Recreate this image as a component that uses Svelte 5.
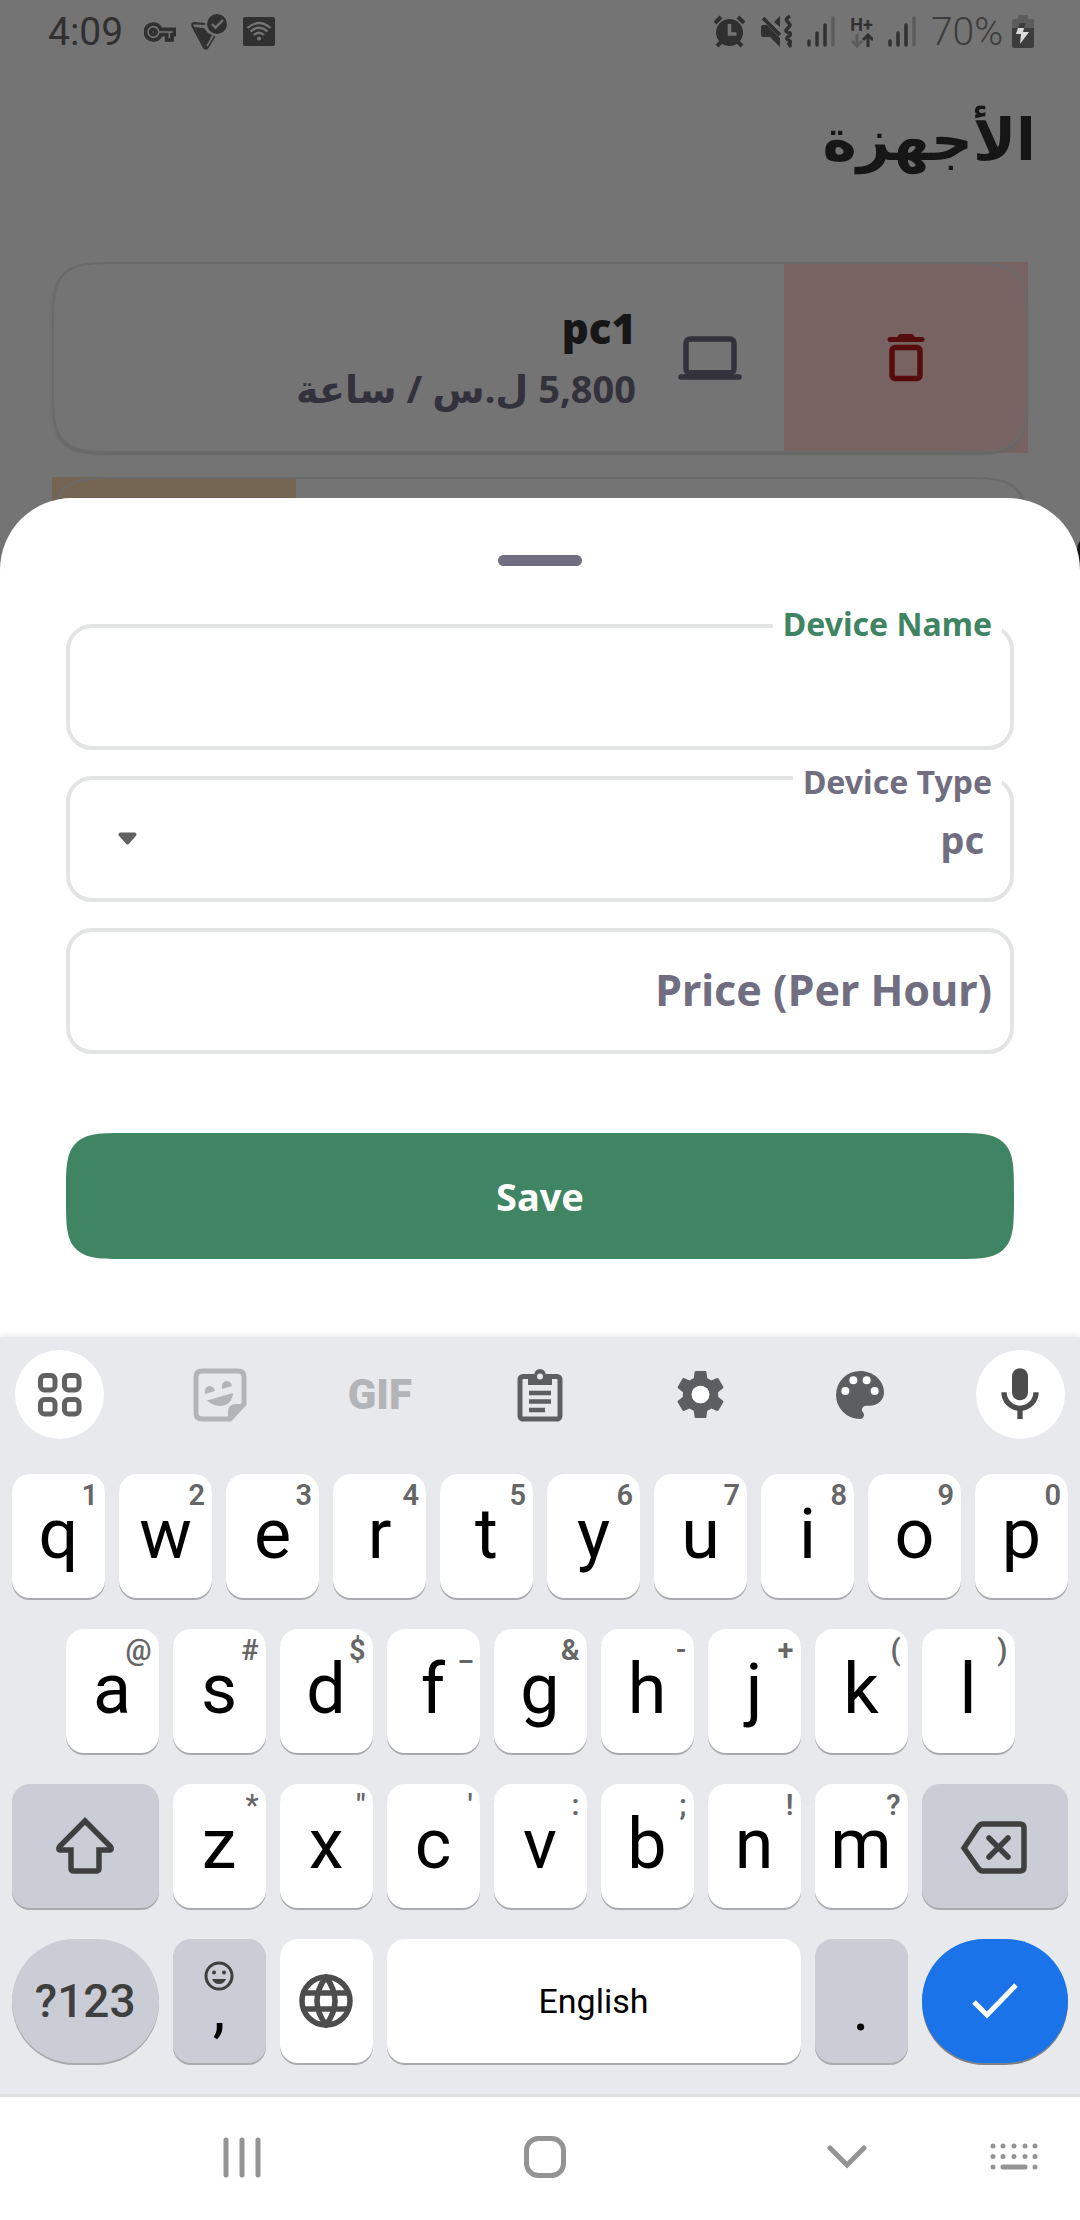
<script>
  let deviceName = $state('');
  let deviceType = $state('pc');
  let price = $state('');

  const numberRow = ['q1', 'w2', 'e3', 'r4', 't5', 'y6', 'u7', 'i8', 'o9', 'p0'];
  const homeRow = ['a@', 's#', 'd$', 'f_', 'g&', 'h-', 'j+', 'k(', 'l)'];
  const lowerRow = ['z*', 'x"', "c'", 'v:', 'b;', 'n!', 'm?'];
</script>

{#snippet letter(pair)}
  <button type="button" class="key">
    <span class="hint">{pair[1]}</span>
    <span class="glyph">{pair[0]}</span>
  </button>
{/snippet}

{#snippet signal()}
  <svg width="28" height="36" viewBox="0 0 28 36" aria-hidden="true">
    <g stroke="#303030" stroke-width="3.500" stroke-linecap="round">
      <path d="M2 27v4M10 19v12M18 11v20" />
      <path d="M26 4v27" stroke="#5c5c5c" />
    </g>
  </svg>
{/snippet}

<div class="screen">
  <div class="stage">
    <div class="backdrop">
      <header class="status">
        <div class="status-group">
          <span class="clock">4:09</span>
          <svg class="key-icon" width="32" height="32" viewBox="0 0 24 24" fill="#303030" stroke="#303030" stroke-width=".8" aria-hidden="true">
            <path d="M22 19h-6v-4h-2.68c-1.14 2.42-3.6 4-6.32 4-3.86 0-7-3.14-7-7s3.14-7 7-7c2.72 0 5.17 1.58 6.32 4H24v6h-2v4zm-4-2h2v-4h2v-2H11.94l-.23-.67C11.01 8.34 9.11 7 7 7c-2.76 0-5 2.24-5 5s2.24 5 5 5c2.11 0 4.01-1.34 4.71-3.33l.23-.67H18v4zM7 15c-1.65 0-3-1.35-3-3s1.35-3 3-3 3 1.35 3 3-1.35 3-3 3zm0-4c-.55 0-1 .45-1 1s.45 1 1 1 1-.45 1-1-.45-1-1-1z" />
          </svg>
          <svg width="37" height="38" viewBox="0 0 37 38" aria-hidden="true">
            <path d="M3 14l10 1 4 5 4 2-6 14z" fill="#303030" />
            <path d="M14 11L3 10.200Q.8 10.500 1.500 13L13 34.500Q14.500 37 16.500 34.500L23.500 23" fill="none" stroke="#303030" stroke-width="2.200" />
            <path d="M4 12.800l10 1.200M16 33l6-10" stroke="#747474" stroke-width="1.500" />
            <circle cx="26" cy="11" r="11.500" fill="#747474" />
            <circle cx="26" cy="11" r="10" fill="#303030" />
            <path d="M21 11l3.500 3.500L32 7" fill="none" stroke="#747474" stroke-width="2.400" />
          </svg>
          <svg width="32" height="36" viewBox="0 0 32 36" aria-hidden="true">
            <rect x="0" y="3" width="32" height="29" rx="2" fill="#303030" />
            <g fill="none" stroke="#747474" stroke-width="2.200">
              <path d="M4.500 14q11.500-10 23 0M7.500 17.500q8.500-7.500 17 0M11 21q5-4.500 10 0" />
            </g>
            <circle cx="16" cy="24.500" r="2" fill="#747474" />
          </svg>
        </div>
        <div class="status-group">
          <svg width="33" height="36" viewBox="0 0 33 36" aria-hidden="true">
            <circle cx="16.500" cy="18.500" r="13.500" fill="#303030" />
            <path d="M2 9l6-6M31 9l-6-6M4 32l5-5M29 32l-5-5" stroke="#303030" stroke-width="4" />
            <path d="M16.500 10v10h7" fill="none" stroke="#747474" stroke-width="3.600" />
          </svg>
          <svg width="31" height="36" viewBox="0 0 31 36" aria-hidden="true">
            <path d="M0 13q0-2 2-2h4l13 13v9L9 23H2q-2 0-2-2zM19 2v11l-6-5z" fill="#303030" />
            <path d="M2 4l17 17" stroke="#303030" stroke-width="3.500" />
            <path d="M29 2q-5 3-3 5t3 4q0 1-3 4t3 4q1 2-2 4t2 4q1 2-1 3l2 3" fill="none" stroke="#303030" stroke-width="3.500" />
          </svg>
          {@render signal()}
          <div class="network" aria-hidden="true">
            <span>H+</span>
            <svg width="22" height="15" viewBox="0 0 22 15">
              <path d="M6 1v12M1 8l5 5 5-5" fill="none" stroke="#5c5c5c" stroke-width="3" />
              <path d="M17 14V2M12 7l5-5 5 5" fill="none" stroke="#303030" stroke-width="3" />
            </svg>
          </div>
          {@render signal()}
          <div class="battery">
            <span>70%</span>
            <svg width="22" height="36" viewBox="0 0 22 36" aria-hidden="true">
              <path d="M6 1h10v4h4q2 0 2 2v8H0V7q0-2 2-2h4z" fill="#5c5c5c" />
              <path d="M0 14h22v18q0 2-2 2H2q-2 0-2-2z" fill="#3c3c3c" />
              <path d="M8 9h6l-2 5H6z" fill="#3c3c3c" />
              <path d="M6 14h6l-1 4h6L8 30l1-10H4z" fill="#dcdcdc" />
            </svg>
          </div>
        </div>
      </header>

      <h1 dir="rtl">الأجهزة</h1>

      <article class="device" dir="rtl">
        <button type="button" class="swipe delete" aria-label="حذف">
          <svg width="38" height="48" viewBox="0 0 38 48" aria-hidden="true">
            <rect x="5" y="13.500" width="28" height="31" rx="3" fill="none" stroke="#560c0c" stroke-width="5.500" />
            <path d="M3 5.500h32" stroke="#560c0c" stroke-width="5" stroke-linecap="round" />
            <path d="M10 4q1-4 4-4h10q3 0 4 4z" fill="#560c0c" />
          </svg>
        </button>
        <svg class="laptop" width="64" height="44" viewBox="0 0 64 44" aria-hidden="true">
          <rect x="8" y="3" width="48" height="34" rx="4" fill="none" stroke="#33323c" stroke-width="5.500" />
          <path d="M3 41h58M12 37h40" stroke="#33323c" stroke-width="5.500" stroke-linecap="round" />
        </svg>
        <div class="device-text">
          <strong>pc1</strong>
          <span>5,800 ل.س / ساعة</span>
        </div>
      </article>
      <article class="device" dir="rtl">
        <div class="swipe edit"></div>
      </article>
      <div class="fab"></div>
    </div>

    <form class="sheet" onsubmit={(e) => e.preventDefault()}>
      <div class="handle"></div>
      <div class="fields">
        <div class="field">
          <input id="device-name" type="text" dir="rtl" bind:value={deviceName} />
          <label class="floating active" for="device-name">Device Name</label>
        </div>
        <div class="field">
          <select id="device-type" dir="rtl" bind:value={deviceType}>
            <option value="pc">pc</option>
          </select>
          <label class="floating filled" for="device-type">Device Type</label>
          <svg class="caret" width="19" height="13" viewBox="0 0 19 13" aria-hidden="true">
            <path d="M2.500 2.500h14L9.500 10.500z" fill="#616161" stroke="#616161" stroke-width="4" stroke-linejoin="round" />
          </svg>
        </div>
        <div class="field">
          <input id="price" type="text" dir="rtl" bind:value={price} />
          {#if !price}
            <label class="resting" for="price"><bdi>Price (Per Hour)</bdi></label>
          {/if}
        </div>
      </div>
      <button type="submit" class="save">Save</button>
    </form>
  </div>

  <section class="keyboard" aria-label="Keyboard">
    <div class="tools">
      <button type="button" class="round" aria-label="More">
        <svg width="44" height="44" viewBox="0 0 44 44" fill="none" stroke="#616161" stroke-width="5" aria-hidden="true">
          <rect x="2.500" y="2.500" width="14.500" height="14.500" rx="4" />
          <rect x="26.500" y="2.500" width="14.500" height="14.500" rx="4" />
          <rect x="2.500" y="26.500" width="14.500" height="14.500" rx="4" />
          <rect x="26.500" y="26.500" width="14.500" height="14.500" rx="4" />
        </svg>
      </button>
      <button type="button" aria-label="Stickers">
        <svg width="54" height="54" viewBox="0 0 54 54" aria-hidden="true">
          <path d="M37 51H9q-6 0-6-6V9q0-6 6-6h36q6 0 6 6v27z" fill="none" stroke="#b3b4b7" stroke-width="5" />
          <path d="M35 52V44q0-8 8-8h9z" fill="#b3b4b7" />
          <path d="M14 32.500l26-7.500q-1 12-12 13-8 0-14-5.500zM12 26q-1-7 4-8 5 0 6 5zM29 21q-1-7 4-8 5 0 6 5z" fill="#b3b4b7" />
        </svg>
      </button>
      <button type="button" class="gif">GIF</button>
      <button type="button" aria-label="Clipboard">
        <svg width="46" height="54" viewBox="0 0 46 54" aria-hidden="true">
          <rect x="3" y="8.500" width="40" height="42.500" rx="3" fill="none" stroke="#5d5e60" stroke-width="5" />
          <path d="M11 7h6q1-6 6-6t6 6h6v10H11z" fill="#5d5e60" />
          <circle cx="23" cy="8.500" r="3" fill="#e8e9ed" />
          <path d="M12 25h22M12 33.500h22M12 42h16" stroke="#5d5e60" stroke-width="4.500" />
        </svg>
      </button>
      <button type="button" aria-label="Settings">
        <svg width="59" height="59" viewBox="0 0 24 24" fill="#5d5e60" aria-hidden="true">
          <path d="M19.140 12.940c.04-.3.06-.61.06-.94 0-.32-.02-.64-.07-.94l2.030-1.580c.18-.14.23-.41.12-.61l-1.920-3.320c-.12-.22-.37-.29-.59-.22l-2.390.96c-.5-.38-1.030-.7-1.620-.94l-.36-2.540c-.04-.24-.24-.41-.48-.41h-3.840c-.24 0-.43.17-.47.41l-.36 2.540c-.59.24-1.130.57-1.620.94l-2.390-.96c-.22-.08-.47 0-.59.22L2.740 8.870c-.12.21-.08.47.12.61l2.030 1.580c-.05.3-.09.63-.09.94s.02.64.07.94l-2.030 1.580c-.18.14-.23.41-.12.61l1.920 3.320c.12.22.37.29.59.22l2.390-.96c.5.38 1.030.7 1.620.94l.36 2.540c.05.24.24.41.48.41h3.840c.24 0 .44-.17.47-.41l.36-2.540c.59-.24 1.130-.56 1.620-.94l2.390.96c.22.08.47 0 .59-.22l1.920-3.320c.12-.22.07-.47-.12-.61l-2.010-1.580zM12 15.600A3.600 3.600 0 1 1 12 8.400a3.600 3.600 0 0 1 0 7.200z" />
          <circle cx="12" cy="12" r="3.600" fill="#fff" />
        </svg>
      </button>
      <button type="button" aria-label="Themes">
        <svg width="64" height="64" viewBox="0 0 24 24" fill="#5d5e60" aria-hidden="true">
          <path d="M12 3a9 9 0 0 0 0 18c.83 0 1.500-.67 1.500-1.500 0-.39-.15-.74-.39-1.010-.23-.26-.38-.61-.38-.99 0-.83.67-1.500 1.500-1.500H16c2.760 0 5-2.240 5-5 0-4.420-4.030-8-9-8z" />
          <g fill="#fff">
            <circle cx="6.500" cy="10.500" r="1.500" />
            <circle cx="9.500" cy="6.500" r="1.500" />
            <circle cx="14.500" cy="6.500" r="1.500" />
            <circle cx="17.500" cy="10.500" r="1.500" />
          </g>
        </svg>
      </button>
      <button type="button" class="round" aria-label="Voice input">
        <svg class="mic" width="64" height="64" viewBox="0 0 24 24" fill="#4d4d4d" aria-hidden="true">
          <path d="M12 14c1.660 0 3-1.340 3-3V5c0-1.660-1.340-3-3-3S9 3.340 9 5v6c0 1.660 1.340 3 3 3z" />
          <path d="M17 11c0 2.760-2.240 5-5 5s-5-2.240-5-5H5c0 3.530 2.610 6.430 6 6.920V21h2v-3.080c3.390-.49 6-3.390 6-6.920h-2z" />
        </svg>
      </button>
    </div>

    <div class="row">
      {#each numberRow as pair}{@render letter(pair)}{/each}
    </div>
    <div class="row home">
      {#each homeRow as pair}{@render letter(pair)}{/each}
    </div>
    <div class="row">
      <button type="button" class="key wide tinted" aria-label="Shift">
        <svg width="64" height="64" viewBox="53 1813 64 64" fill="none" stroke="#3f3f3f" stroke-width="5.500" aria-hidden="true">
          <path d="M85 1820L60 1845Q57 1849 61 1849H71V1867Q71 1870 74 1870H96Q99 1870 99 1867V1849H109Q113 1849 110 1845Z" />
        </svg>
      </button>
      {#each lowerRow as pair}{@render letter(pair)}{/each}
      <button type="button" class="key wide tinted" aria-label="Backspace">
        <svg width="70" height="60" viewBox="959 1816 70 60" fill="none" stroke="#3f3f3f" stroke-width="5.500" aria-hidden="true">
          <path d="M963 1848L977 1827Q979 1824 982 1824H1019Q1023 1824 1023 1828V1867Q1023 1871 1019 1871H982Q979 1871 977 1868Z" />
          <path d="M988 1838l19 19M1007 1838l-19 19" stroke-linecap="round" />
        </svg>
      </button>
    </div>
    <div class="row">
      <button type="button" class="key wide tinted pill symbols">?123</button>
      <button type="button" class="key tinted punctuation">
        <svg class="smile" width="30" height="30" viewBox="0 0 30 30" aria-hidden="true">
          <circle cx="15" cy="15" r="13" fill="none" stroke="#3f3f3f" stroke-width="3" />
          <circle cx="10" cy="11.500" r="2" fill="#3f3f3f" />
          <circle cx="20" cy="11.500" r="2" fill="#3f3f3f" />
          <path d="M8 18h14q-2 5-7 5t-7-5z" fill="#3f3f3f" />
        </svg>
        <span>,</span>
      </button>
      <button type="button" class="key" aria-label="Change language">
        <svg width="54" height="54" viewBox="0 0 54 54" fill="none" stroke="#4d4d4d" stroke-width="5.500" aria-hidden="true">
          <circle cx="27" cy="27" r="24" />
          <path d="M27 3Q9 27 27 51Q45 27 27 3zM5 19h44M5 35h44" />
        </svg>
      </button>
      <button type="button" class="key space">English</button>
      <button type="button" class="key tinted punctuation"><span>.</span></button>
      <button type="button" class="key wide pill done" aria-label="Done">
        <svg width="48" height="38" viewBox="0 0 48 38" fill="none" stroke="#fff" stroke-width="5" aria-hidden="true">
          <path d="M3 20l13 13L45 3" />
        </svg>
      </button>
    </div>
  </section>

  <nav class="system" aria-label="System">
    <div class="system-main">
      <button type="button" aria-label="Recent apps">
        <svg width="40" height="42" viewBox="0 0 40 42" stroke="#949494" stroke-width="5" stroke-linecap="round" aria-hidden="true">
          <path d="M4 4v35M20 4v35M36 4v35" />
        </svg>
      </button>
      <button type="button" aria-label="Home">
        <svg width="42" height="42" viewBox="0 0 42 42" aria-hidden="true">
          <rect x="2.500" y="2.500" width="37" height="37" rx="12" fill="none" stroke="#949494" stroke-width="5" />
        </svg>
      </button>
      <button type="button" aria-label="Hide keyboard">
        <svg width="40" height="42" viewBox="0 0 40 42" aria-hidden="true">
          <path d="M3 12l17 17 17-17" fill="none" stroke="#949494" stroke-width="5" stroke-linecap="round" />
        </svg>
      </button>
    </div>
    <button type="button" aria-label="Switch keyboard">
      <svg width="48" height="42" viewBox="0 0 48 42" stroke="#949494" stroke-width="5" stroke-linecap="round" aria-hidden="true">
        <path d="M3 10h0M13 10h0M24 10h0M35 10h0M45 10h0M3 20.500h0M13 20.500h0M24 20.500h0M35 20.500h0M45 20.500h0M3 31h0M45 31h0M13 31h22" />
      </svg>
    </button>
  </nav>
</div>

<style>
  :global(body) {
    margin: 0;
    background: #fff;
  }

  .screen {
    display: flex;
    flex-direction: column;
    min-height: 100vh;
    font-family: Roboto, sans-serif;
  }

  button {
    display: flex;
    align-items: center;
    justify-content: center;
    margin: 0;
    padding: 0;
    border: 0;
    background: none;
    font-family: inherit;
    color: inherit;
  }

  svg {
    display: block;
    flex: none;
  }

  /* The sheet and the dimmed page share one grid cell. */
  .stage {
    display: grid;
    flex: 1;
    overflow: hidden;
    background: #747474;
  }

  .backdrop,
  .sheet {
    grid-area: 1 / 1;
    min-width: 0;
  }

  .backdrop {
    position: relative;
    display: flex;
    flex-direction: column;
    height: 0;
    color: #161616;
    font-family: 'Noto Sans', 'DejaVu Sans', sans-serif;
  }

  .status {
    display: flex;
    flex: none;
    align-items: center;
    justify-content: space-between;
    height: 64px;
    padding: 0 46px 0 48px;
    color: #303030;
    font-family: Roboto, sans-serif;
    font-size: 39px;
  }

  .status-group {
    display: flex;
    align-items: center;
    gap: 15px;
  }

  .key-icon {
    margin-left: 6px;
  }

  .network {
    display: flex;
    flex-direction: column;
    align-items: center;
    font-size: 18px;
    font-weight: 700;
    line-height: 17px;
  }

  .battery {
    display: flex;
    align-items: center;
    gap: 9px;
    color: #3c3c3c;
    font-weight: 300;
  }

  h1 {
    flex: none;
    margin: 0;
    padding: 24px 44px 74px;
    font-size: 58px;
    font-weight: 700;
    line-height: 100px;
    text-align: right;
  }

  .device {
    position: relative;
    display: flex;
    flex: none;
    align-items: center;
    height: 191px;
    margin: 0 52px 24px;
  }

  .device::after {
    content: '';
    position: absolute;
    inset: 0;
    border: 2px solid #696b6a;
    border-radius: 36px;
    box-shadow: 0 2px 2px #666;
    pointer-events: none;
  }

  .swipe {
    align-self: stretch;
    width: 25%;
  }

  .delete {
    background: #776462;
  }

  .edit {
    margin-right: auto;
    background: #756653;
  }

  .laptop {
    margin: 0 42px;
  }

  .device-text {
    display: flex;
    flex-direction: column;
    color: #33323c;
    font-size: 38px;
    font-weight: 700;
    line-height: 60px;
  }

  .device-text strong {
    color: #161616;
    font-size: 42px;
  }

  /* Floating action button, almost wholly off the right edge. */
  .fab {
    position: absolute;
    top: 534px;
    right: -30px;
    width: 33px;
    height: 80px;
    border-radius: 16px;
    background: #161616;
  }

  .sheet {
    display: flex;
    flex-direction: column;
    align-self: end;
    position: relative;
    padding: 57px 66px 78px;
    border-radius: 72px 72px 0 0;
    background: #fff;
    color: #706e80;
    font-family: 'Noto Sans', sans-serif;
    font-weight: 700;
  }

  .handle {
    align-self: center;
    width: 84px;
    height: 11px;
    margin-bottom: 58px;
    border-radius: 6px;
    background: #706e80;
  }

  .fields {
    display: flex;
    flex-direction: column;
    gap: 26px;
    margin-bottom: 79px;
  }

  .field {
    position: relative;
  }

  input,
  select {
    display: block;
    box-sizing: border-box;
    width: 100%;
    height: 126px;
    margin: 0;
    padding: 0 26px;
    border: 4px solid #e2e5e4;
    border-radius: 26px;
    outline: 0;
    background: #fff;
    color: inherit;
    font: inherit;
    font-size: 38px;
    appearance: none;
  }

  .floating {
    position: absolute;
    top: -16px;
    right: 12px;
    padding: 0 10px;
    background: #fff;
    font-size: 32px;
    line-height: 32px;
  }

  .floating.filled {
    top: -10px;
  }

  .active {
    color: #3f8463;
  }

  .resting {
    position: absolute;
    inset: 0 22px 4px;
    display: flex;
    align-items: center;
    font-size: 43px;
    direction: rtl;
    pointer-events: none;
  }

  .caret {
    position: absolute;
    top: 56px;
    left: 52px;
    pointer-events: none;
  }

  .save {
    height: 126px;
    border-radius: 40px;
    background: #3f8463;
    color: #fff;
    font-size: 38px;
    font-weight: 700;
  }

  @supports (corner-shape: squircle) {
    .save,
    .device::after {
      border-radius: 70px;
      corner-shape: squircle;
    }
  }

  .keyboard {
    position: relative;
    display: flex;
    flex-direction: column;
    gap: 31px;
    padding: 0 12px 31px;
    border-bottom: 3px solid #e0e0e0;
    background: #e8e9ed;
    box-shadow: 0 -2px 6px rgba(0, 0, 0, 0.08);
  }

  .tools {
    display: flex;
    align-items: center;
    justify-content: space-between;
    height: 89px;
    padding: 13px 3px 4px;
  }

  .tools button {
    width: 89px;
    height: 89px;
  }

  .tools .round {
    border-radius: 50%;
    background: #fff;
  }

  .tools .gif {
    color: #b3b4b7;
    font-size: 42px;
    font-weight: 900;
  }

  .row {
    display: grid;
    grid-template-columns: repeat(20, minmax(0, 1fr));
    gap: 14px;
  }

  .key {
    position: relative;
    grid-column: span 2;
    height: 124px;
    border-radius: 18px;
    background: #fff;
    box-shadow: 0 2px 0 #a9aaad;
    color: #000;
    font-size: 70px;
  }

  .home .key:first-child {
    grid-column: 2 / span 2;
  }

  .row .wide {
    grid-column: span 3;
  }

  .row .space {
    grid-column: span 8;
    font-size: 34px;
  }

  .tinted {
    background: #cbcdd6;
  }

  .pill {
    border-radius: 62px;
  }

  .symbols {
    color: #3f3f3f;
    font-size: 46px;
    font-weight: 500;
  }

  .done {
    background: #1a73e8;
    box-shadow: 0 2px 0 #7d8087;
  }

  .glyph {
    margin-bottom: 4px;
    line-height: 60px;
  }

  .hint {
    position: absolute;
    top: 6px;
    right: 7px;
    color: #666;
    font-size: 29px;
    font-weight: 600;
    line-height: 30px;
  }

  .punctuation {
    flex-direction: column;
    justify-content: flex-end;
    padding-bottom: 24px;
    font-size: 64px;
    line-height: 60px;
  }

  .smile {
    position: absolute;
    top: 22px;
    left: calc(50% - 15px);
  }

  .system {
    display: flex;
    align-items: center;
    gap: 123px;
    height: 123px;
    padding: 0 42px 4px 222px;
    box-sizing: border-box;
    background: #fff;
  }

  .system-main {
    display: flex;
    flex: 1;
    justify-content: space-between;
  }
</style>
